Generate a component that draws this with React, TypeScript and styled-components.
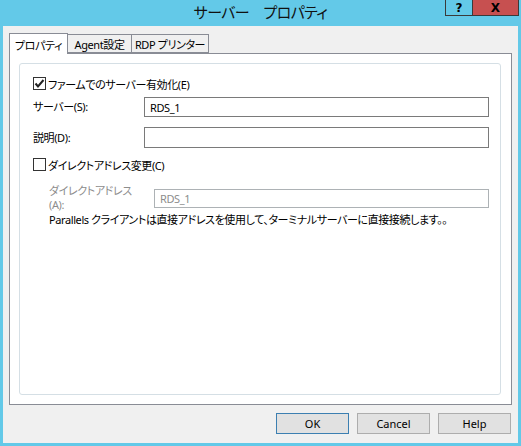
import React from "react";
import styled, { createGlobalStyle } from "styled-components";

const Global = createGlobalStyle`
  html, body { margin: 0; padding: 0; }
  body {
    font-family: "Noto Sans", "Noto Sans CJK JP", sans-serif;
    font-feature-settings: "palt";
    font-size: 11px;
    letter-spacing: -0.4px;
    color: #000;
  }
`;

const Window = styled.div`
  width: 521px;
  height: 446px;
  box-sizing: border-box;
  background: #63c9e8;
  padding: 0 3px 3px 3px;
  display: flex;
  flex-direction: column;
`;

const TitleBar = styled.div`
  height: 26px;
  position: relative;
  display: flex;
  align-items: center;
  justify-content: center;
  flex-shrink: 0;
`;

const Title = styled.div`
  font-size: 15px;
  color: #111;
  margin-top: -3px;
  letter-spacing: -0.6px;
`;

const Caption = styled.div`
  position: absolute;
  top: 0;
  right: -1px;
  display: flex;
`;

const CapButton = styled.div<{ $close?: boolean }>`
  height: 16px;
  width: ${(p) => (p.$close ? "46px" : "28px")};
  box-sizing: border-box;
  background: ${(p) => (p.$close ? "#c75050" : "#63c9e8")};
  border: 1px solid #3a3a3a;
  border-top: none;
  ${(p) => (p.$close ? "border-left: none;" : "")}
  display: flex;
  align-items: center;
  justify-content: center;
  font-family: "DejaVu Sans", sans-serif;
  font-weight: bold;
  font-size: 12px;
  letter-spacing: 0;
  line-height: 1;
  color: #000;
`;

const Client = styled.div`
  flex: 1;
  background: #f0f0f0;
  padding: 7px 6px 9px 6px;
  display: flex;
  flex-direction: column;
`;

const TabStrip = styled.div`
  display: flex;
  align-items: flex-end;
  height: 20px;
  position: relative;
  z-index: 1;
`;

const Tab = styled.div<{ $active?: boolean; $w: number }>`
  box-sizing: border-box;
  width: ${(p) => p.$w}px;
  height: ${(p) => (p.$active ? "21px" : "19px")};
  margin-bottom: ${(p) => (p.$active ? "-1px" : "0")};
  padding-top: ${(p) => (p.$active ? "1px" : "0")};
  border: 1px solid #898c95;
  border-bottom: ${(p) => (p.$active ? "none" : "1px solid #898c95")};
  ${(p) => (p.$active ? "" : "border-left: none;")}
  background: ${(p) => (p.$active ? "#fff" : "#f0f0f0")};
  display: flex;
  align-items: center;
  justify-content: center;
  white-space: nowrap;
`;

const Panel = styled.div`
  flex: 1;
  background: #fff;
  border: 1px solid #898c95;
  padding: 9px 10px 9px 9px;
  display: flex;
  flex-direction: column;
`;

const Group = styled.div`
  flex: 1;
  border: 1px solid #d5dfe5;
  border-radius: 3px;
  padding: 12px 11px 0 13px;
  display: flex;
  flex-direction: column;
`;

const CheckRow = styled.label<{ $mt?: number }>`
  display: flex;
  align-items: center;
  gap: 2px;
  margin-top: ${(p) => p.$mt ?? 0}px;
  height: 15px;
  white-space: nowrap;
`;

const Box = styled.span`
  width: 13px;
  height: 13px;
  box-sizing: border-box;
  border: 1px solid #333;
  background: #fff;
  display: flex;
  align-items: center;
  justify-content: center;
`;

const FieldRow = styled.div<{ $mt?: number; $indent?: number; $labelW: number }>`
  display: grid;
  grid-template-columns: ${(p) => p.$labelW}px 1fr;
  align-items: center;
  margin-top: ${(p) => p.$mt ?? 0}px;
  padding-left: ${(p) => p.$indent ?? 0}px;
`;

const Label = styled.div<{ $disabled?: boolean }>`
  color: ${(p) => (p.$disabled ? "#8d8d8d" : "#000")};
  line-height: 14px;
`;

const LabelLine = styled.div`
  height: 14px;
  line-height: 14px;
  white-space: nowrap;
`;

const Input = styled.div<{ $disabled?: boolean; $h?: number }>`
  height: ${(p) => p.$h ?? 20}px;
  box-sizing: border-box;
  border: 1px solid ${(p) => (p.$disabled ? "#adb2b5" : "#7a7a7a")};
  background: #fff;
  padding: 0 5px;
  display: flex;
  align-items: center;
  color: ${(p) => (p.$disabled ? "#8d8d8d" : "#000")};
`;

const Note = styled.div`
  margin-top: 1px;
  padding-left: 16px;
  line-height: 14px;
  white-space: nowrap;
`;

const ButtonRow = styled.div`
  display: flex;
  justify-content: flex-end;
  gap: 8px;
  margin-top: 8px;
  padding-right: 1px;
`;

const Button = styled.div<{ $default?: boolean }>`
  width: 73px;
  height: 21px;
  box-sizing: border-box;
  background: #e1e1e1;
  border: 1px solid ${(p) => (p.$default ? "#3c7fb1" : "#adadad")};
  display: flex;
  align-items: center;
  justify-content: center;
  letter-spacing: 0;
`;

const Check = () => (
  <svg width="11" height="11" viewBox="0 0 11 11">
    <path d="M1.5 5.5 L4 8.5 L9.5 2" fill="none" stroke="#222" strokeWidth="2" />
  </svg>
);

export default function App() {
  return (
    <>
      <Global />
      <Window>
        <TitleBar>
          <Title>サーバー　プロパティ</Title>
          <Caption>
            <CapButton>?</CapButton>
            <CapButton $close>X</CapButton>
          </Caption>
        </TitleBar>
        <Client>
          <TabStrip>
            <Tab $active $w={59}>プロパティ</Tab>
            <Tab $w={64}>Agent設定</Tab>
            <Tab $w={77}>RDP プリンター</Tab>
          </TabStrip>
          <Panel>
            <Group>
              <CheckRow>
                <Box>
                  <Check />
                </Box>
                <span>ファームでのサーバー有効化(E)</span>
              </CheckRow>
              <FieldRow $labelW={111} $mt={6}>
                <Label>サーバー(S):</Label>
                <Input>RDS_1</Input>
              </FieldRow>
              <FieldRow $labelW={111} $mt={10}>
                <Label>説明(D):</Label>
                <Input $h={21} />
              </FieldRow>
              <CheckRow $mt={9}>
                <Box />
                <span>ダイレクトアドレス変更(C)</span>
              </CheckRow>
              <FieldRow $labelW={105} $mt={12} $indent={16}>
                <Label $disabled>
                  <LabelLine>ダイレクトアドレス</LabelLine>
                  <LabelLine>(A):</LabelLine>
                </Label>
                <Input $disabled $h={19}>
                  RDS_1
                </Input>
              </FieldRow>
              <Note>Parallels クライアントは直接アドレスを使用して、ターミナルサーバーに直接接続します。。</Note>
            </Group>
          </Panel>
          <ButtonRow>
            <Button $default>OK</Button>
            <Button>Cancel</Button>
            <Button>Help</Button>
          </ButtonRow>
        </Client>
      </Window>
    </>
  );
}
